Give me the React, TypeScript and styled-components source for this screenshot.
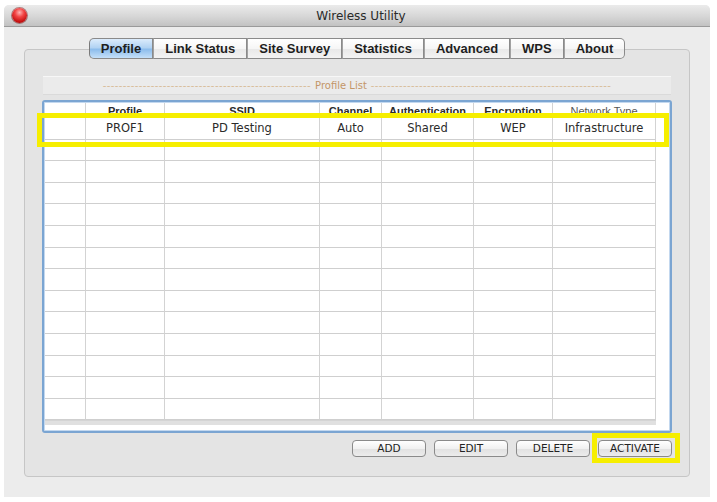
import React from 'react'
import styled, { createGlobalStyle } from 'styled-components'

const GlobalStyle = createGlobalStyle`
  html, body {
    margin: 0;
    padding: 0;
    background: #ffffff;
    font-family: "DejaVu Sans", "Liberation Sans", sans-serif;
  }
`

const Page = styled.div`
  padding: 5px 7px 5px 4px;
`

const Window = styled.div`
  width: 706px;
  height: 492px;
  background: #ececec;
  border-radius: 5px 5px 0 0;
  display: flex;
  flex-direction: column;
  box-sizing: border-box;
`

const TitleBar = styled.div`
  height: 22px;
  box-sizing: border-box;
  display: grid;
  grid-template-columns: 1fr auto 1fr;
  align-items: center;
  border-radius: 5px 5px 0 0;
  background: linear-gradient(#ebebeb, #d6d6d6 55%, #c2c2c2);
  border-bottom: 1px solid #9a9a9a;
  padding-left: 8px;
`

const CloseButton = styled.span`
  width: 15px;
  height: 15px;
  border-radius: 50%;
  background: radial-gradient(circle at 50% 30%, #ffb3b3 0%, #f24444 35%, #c10d0d 75%, #8a0000 100%);
  box-shadow: 0 0 0 1px rgba(110, 0, 0, 0.45);
`

const Title = styled.span`
  font-size: 12px;
  color: #2a2a2a;
`

const Content = styled.div`
  flex: 1;
  padding: 22px 20px 0 20px;
`

const GroupBox = styled.div`
  height: 428px;
  box-sizing: border-box;
  background: #e4e4e4;
  border: 1px solid #c6c6c6;
  border-radius: 4px;
  padding: 0 17px;
  display: flex;
  flex-direction: column;
`

const TabBar = styled.div`
  margin-top: -12px;
  display: flex;
  justify-content: center;
`

const Tab = styled.div<{ $active?: boolean; $first?: boolean; $last?: boolean }>`
  height: 21px;
  box-sizing: border-box;
  padding: 0 11px;
  display: flex;
  align-items: center;
  font-family: "Liberation Sans", Arial, sans-serif;
  font-weight: bold;
  font-size: 13px;
  color: #1e1e1e;
  border: 1px solid #8a8a8a;
  border-left: ${p => (p.$first ? '1px solid #7a7a7a' : 'none')};
  border-radius: ${p => (p.$first ? '5px 0 0 5px' : p.$last ? '0 5px 5px 0' : '0')};
  background: ${p =>
    p.$active
      ? 'linear-gradient(#dcecfc, #b2d3f3 45%, #8dbdec 55%, #c5e0f9)'
      : 'linear-gradient(#ffffff, #f6f6f6 50%, #e9e9e9 55%, #f3f3f3)'};
  & + & {
    border-left: 1px solid #a2a2a2;
  }
`

const ListStrip = styled.div`
  margin: 17px 1px 0 1px;
  height: 19px;
  box-sizing: border-box;
  background: #ebebeb;
  border-top: 1px solid #f7f7f7;
  border-bottom: 1px solid #dadada;
  display: flex;
  align-items: center;
  justify-content: center;
  gap: 4px;
  font-size: 10px;
  color: #c39668;
  overflow: hidden;
  white-space: nowrap;
`

const Dashes = styled.span`
  color: #d8bc98;
  letter-spacing: 0.4px;
`

const TableFrame = styled.div`
  position: relative;
  margin-top: 5px;
  height: 333px;
  box-sizing: border-box;
  border: 2px solid #7ba5d2;
  border-radius: 3px;
  box-shadow: inset 0 0 0 1px #c3d8ef;
  background: #ffffff;
  padding: 1px;
  display: flex;
  flex-direction: column;
`

const Row = styled.div<{ $head?: boolean }>`
  display: grid;
  grid-template-columns: 41px 79px 155px 62px 92px 79px 103px 1fr;
  height: ${p => (p.$head ? '15px' : '21.6px')};
  flex-shrink: 0;
`

const Cell = styled.div<{ $head?: boolean; $plain?: boolean }>`
  border-right: 1px solid #d3d3d3;
  border-bottom: 1px solid ${p => (p.$head ? '#dcdcdc' : '#cfcfcf')};
  display: flex;
  align-items: center;
  justify-content: center;
  overflow: hidden;
  white-space: nowrap;
  font-family: ${p => (p.$head ? '"Liberation Sans", Arial, sans-serif' : '"DejaVu Sans", sans-serif')};
  font-size: ${p => (p.$head ? '11px' : '11.5px')};
  font-weight: ${p => (p.$head && !p.$plain ? 'bold' : 'normal')};
  color: ${p => (p.$plain ? '#555' : '#2b2b2b')};
  padding-top: ${p => (p.$head ? '2px' : '0')};
`

const Spacer = styled.div<{ $head?: boolean }>`
  border-bottom: ${p => (p.$head ? '1px solid #dcdcdc' : 'none')};
`

const ScrollStrip = styled.div`
  height: 4px;
  background: #e0e0e0;
  border-top: 1px solid #d4d4d4;
  margin-right: 13px;
`

const RowHighlight = styled.div`
  position: absolute;
  left: -7px;
  top: 11px;
  width: 632px;
  height: 34px;
  box-sizing: border-box;
  border: 5px solid #f6ee00;
  pointer-events: none;
`

const ButtonRow = styled.div`
  margin-top: 7px;
  display: flex;
  justify-content: flex-end;
  gap: 8px;
`

const Button = styled.button<{ $marked?: boolean }>`
  position: relative;
  width: 74px;
  height: 17px;
  padding: 0;
  box-sizing: border-box;
  border: 1px solid #8a8a8a;
  border-radius: 4px;
  background: linear-gradient(#ffffff, #f1f1f1 50%, #e2e2e2 55%, #ececec);
  font-family: "DejaVu Sans", sans-serif;
  font-size: 10.5px;
  color: #222;
  line-height: 15px;
  &::after {
    content: '';
    display: ${p => (p.$marked ? 'block' : 'none')};
    position: absolute;
    left: -7px;
    top: -8px;
    width: 88px;
    height: 30px;
    box-sizing: border-box;
    border: 5px solid #f6ee00;
  }
`

const tabs = ['Profile', 'Link Status', 'Site Survey', 'Statistics', 'Advanced', 'WPS', 'About']
const headers = ['', 'Profile', 'SSID', 'Channel', 'Authentication', 'Encryption', 'Network Type']
const profile = ['', 'PROF1', 'PD Testing', 'Auto', 'Shared', 'WEP', 'Infrastructure']

const App: React.FC = () => {
  const rows = Array.from({ length: 14 }, (_, i) => (i === 0 ? profile : headers.map(() => '')))

  return (
    <>
      <GlobalStyle />
      <Page>
        <Window>
          <TitleBar>
            <CloseButton />
            <Title>Wireless Utility</Title>
            <span />
          </TitleBar>
          <Content>
            <GroupBox>
              <TabBar>
                {tabs.map((t, i) => (
                  <Tab key={t} $active={i === 0} $first={i === 0} $last={i === tabs.length - 1}>
                    {t}
                  </Tab>
                ))}
              </TabBar>

              <ListStrip>
                <Dashes>{'-'.repeat(52)}</Dashes>
                Profile List
                <Dashes>{'-'.repeat(60)}</Dashes>
              </ListStrip>

              <TableFrame>
                <Row $head>
                  {headers.map((h, i) => (
                    <Cell key={i} $head $plain={h === 'Network Type'}>
                      {h}
                    </Cell>
                  ))}
                  <Spacer $head />
                </Row>
                {rows.map((r, ri) => (
                  <Row key={ri}>
                    {r.map((c, ci) => (
                      <Cell key={ci}>{c}</Cell>
                    ))}
                    <Spacer />
                  </Row>
                ))}
                <ScrollStrip />
                <RowHighlight />
              </TableFrame>

              <ButtonRow>
                <Button>ADD</Button>
                <Button>EDIT</Button>
                <Button>DELETE</Button>
                <Button $marked>ACTIVATE</Button>
              </ButtonRow>
            </GroupBox>
          </Content>
        </Window>
      </Page>
    </>
  )
}

export default App
